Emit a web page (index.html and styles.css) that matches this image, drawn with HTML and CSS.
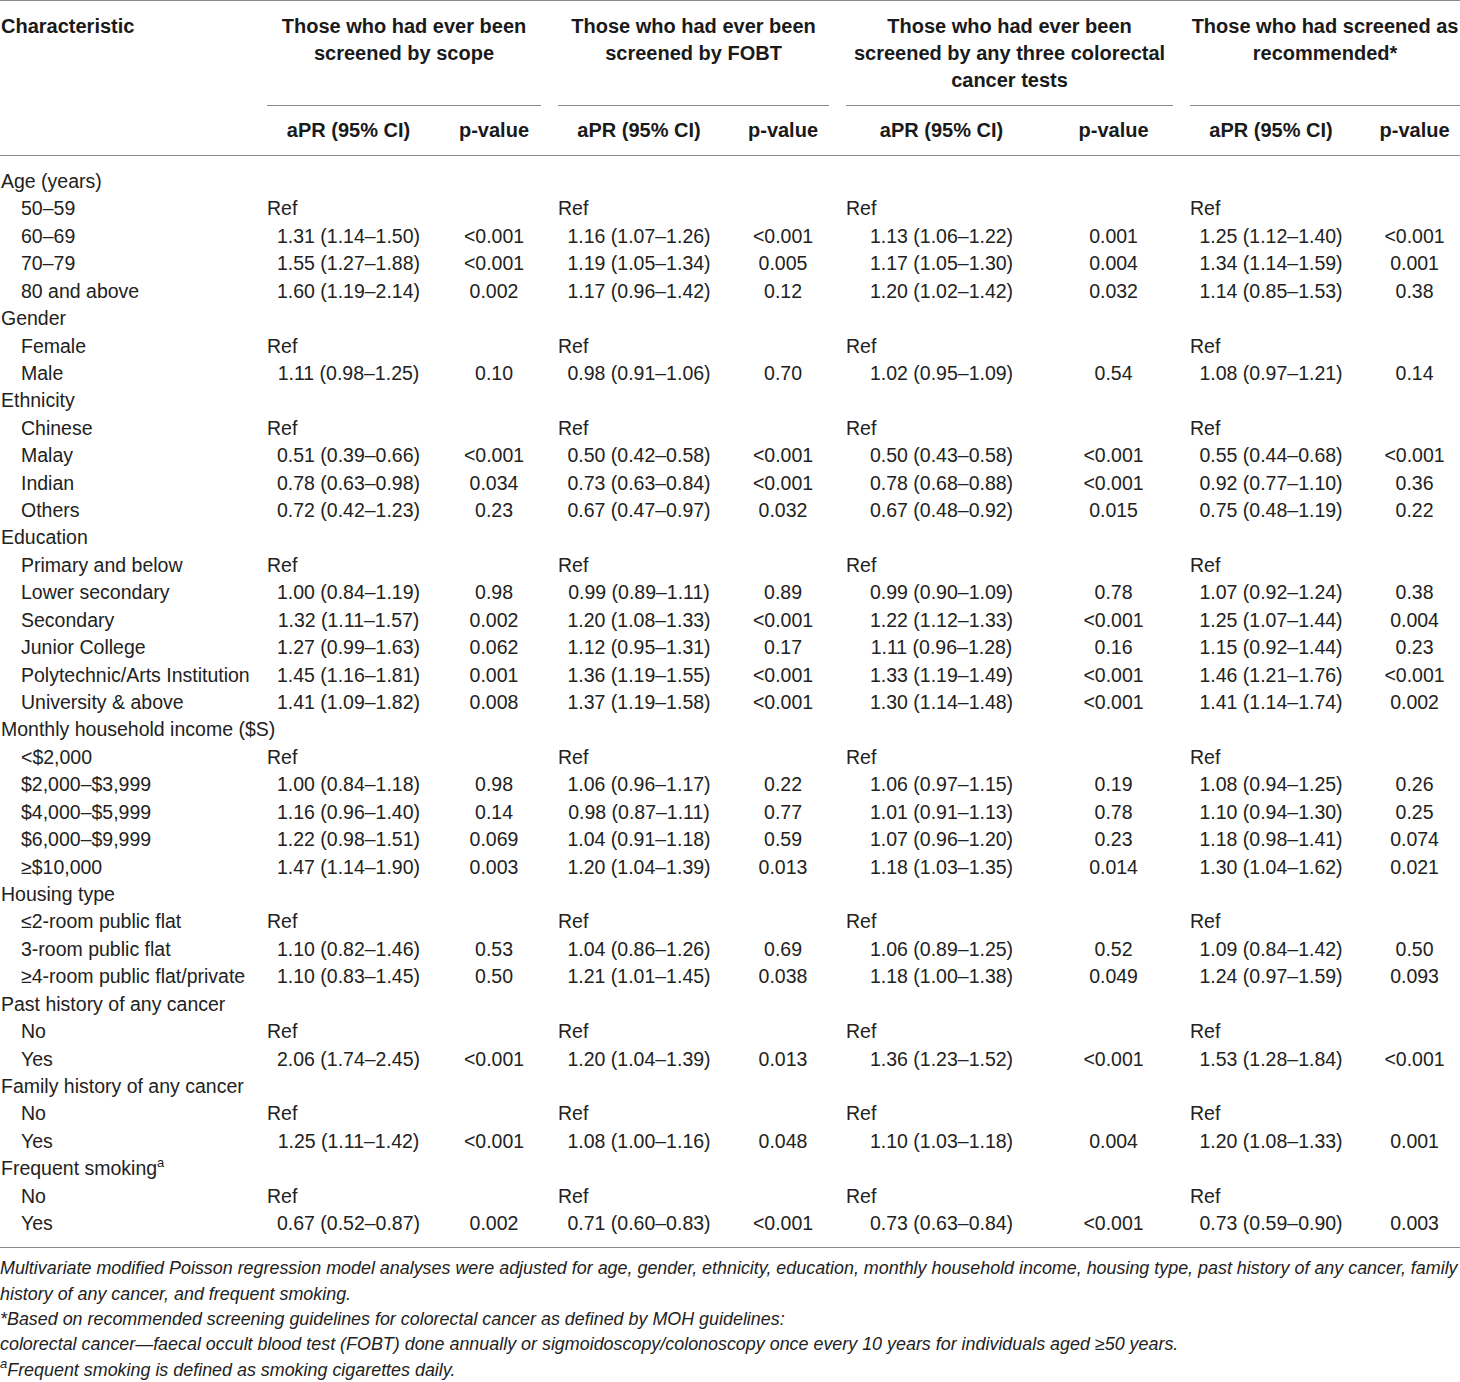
FILE: index.html
```html
<!DOCTYPE html>
<html lang="en">
<head>
<meta charset="utf-8">
<title>Table</title>
<link rel="stylesheet" href="styles.css">
</head>
<body>
<div class="page">
<table class="tbl">
  <colgroup>
    <col class="w-char">
    <col class="w-apr1"><col class="w-p1">
    <col class="w-apr2"><col class="w-p2">
    <col class="w-apr3"><col class="w-p3">
    <col class="w-apr4"><col class="w-p4">
  </colgroup>
  <thead>
    <tr>
      <th class="h-char" rowspan="2">Characteristic</th>
      <th class="h-grp" colspan="2"><div class="grp-rule">Those who had ever been<br>screened by scope</div></th>
      <th class="h-grp" colspan="2"><div class="grp-rule">Those who had ever been<br>screened by FOBT</div></th>
      <th class="h-grp" colspan="2"><div class="grp-rule">Those who had ever been<br>screened by any three colorectal<br>cancer tests</div></th>
      <th class="h-grp last" colspan="2"><div class="grp-rule">Those who had screened as<br>recommended*</div></th>
    </tr>
    <tr>
      <th class="h-sub">aPR (95% CI)</th><th class="h-sub">p-value</th>
      <th class="h-sub">aPR (95% CI)</th><th class="h-sub">p-value</th>
      <th class="h-sub">aPR (95% CI)</th><th class="h-sub">p-value</th>
      <th class="h-sub">aPR (95% CI)</th><th class="h-sub last">p-value</th>
    </tr>
  </thead>
  <tbody>
    <tr class="first"><td class="cat">Age (years)</td><td></td><td></td><td></td><td></td><td></td><td></td><td></td><td></td></tr>
    <tr><td class="item">50–59</td><td class="ref">Ref</td><td></td><td class="ref">Ref</td><td></td><td class="ref">Ref</td><td></td><td class="ref">Ref</td><td></td></tr>
    <tr><td class="item">60–69</td><td class="val">1.31 (1.14–1.50)</td><td class="pv">&lt;0.001</td><td class="val">1.16 (1.07–1.26)</td><td class="pv">&lt;0.001</td><td class="val">1.13 (1.06–1.22)</td><td class="pv">0.001</td><td class="val">1.25 (1.12–1.40)</td><td class="pv">&lt;0.001</td></tr>
    <tr><td class="item">70–79</td><td class="val">1.55 (1.27–1.88)</td><td class="pv">&lt;0.001</td><td class="val">1.19 (1.05–1.34)</td><td class="pv">0.005</td><td class="val">1.17 (1.05–1.30)</td><td class="pv">0.004</td><td class="val">1.34 (1.14–1.59)</td><td class="pv">0.001</td></tr>
    <tr><td class="item">80 and above</td><td class="val">1.60 (1.19–2.14)</td><td class="pv">0.002</td><td class="val">1.17 (0.96–1.42)</td><td class="pv">0.12</td><td class="val">1.20 (1.02–1.42)</td><td class="pv">0.032</td><td class="val">1.14 (0.85–1.53)</td><td class="pv">0.38</td></tr>

    <tr><td class="cat">Gender</td><td></td><td></td><td></td><td></td><td></td><td></td><td></td><td></td></tr>
    <tr><td class="item">Female</td><td class="ref">Ref</td><td></td><td class="ref">Ref</td><td></td><td class="ref">Ref</td><td></td><td class="ref">Ref</td><td></td></tr>
    <tr><td class="item">Male</td><td class="val">1.11 (0.98–1.25)</td><td class="pv">0.10</td><td class="val">0.98 (0.91–1.06)</td><td class="pv">0.70</td><td class="val">1.02 (0.95–1.09)</td><td class="pv">0.54</td><td class="val">1.08 (0.97–1.21)</td><td class="pv">0.14</td></tr>

    <tr><td class="cat">Ethnicity</td><td></td><td></td><td></td><td></td><td></td><td></td><td></td><td></td></tr>
    <tr><td class="item">Chinese</td><td class="ref">Ref</td><td></td><td class="ref">Ref</td><td></td><td class="ref">Ref</td><td></td><td class="ref">Ref</td><td></td></tr>
    <tr><td class="item">Malay</td><td class="val">0.51 (0.39–0.66)</td><td class="pv">&lt;0.001</td><td class="val">0.50 (0.42–0.58)</td><td class="pv">&lt;0.001</td><td class="val">0.50 (0.43–0.58)</td><td class="pv">&lt;0.001</td><td class="val">0.55 (0.44–0.68)</td><td class="pv">&lt;0.001</td></tr>
    <tr><td class="item">Indian</td><td class="val">0.78 (0.63–0.98)</td><td class="pv">0.034</td><td class="val">0.73 (0.63–0.84)</td><td class="pv">&lt;0.001</td><td class="val">0.78 (0.68–0.88)</td><td class="pv">&lt;0.001</td><td class="val">0.92 (0.77–1.10)</td><td class="pv">0.36</td></tr>
    <tr><td class="item">Others</td><td class="val">0.72 (0.42–1.23)</td><td class="pv">0.23</td><td class="val">0.67 (0.47–0.97)</td><td class="pv">0.032</td><td class="val">0.67 (0.48–0.92)</td><td class="pv">0.015</td><td class="val">0.75 (0.48–1.19)</td><td class="pv">0.22</td></tr>

    <tr><td class="cat">Education</td><td></td><td></td><td></td><td></td><td></td><td></td><td></td><td></td></tr>
    <tr><td class="item">Primary and below</td><td class="ref">Ref</td><td></td><td class="ref">Ref</td><td></td><td class="ref">Ref</td><td></td><td class="ref">Ref</td><td></td></tr>
    <tr><td class="item">Lower secondary</td><td class="val">1.00 (0.84–1.19)</td><td class="pv">0.98</td><td class="val">0.99 (0.89–1.11)</td><td class="pv">0.89</td><td class="val">0.99 (0.90–1.09)</td><td class="pv">0.78</td><td class="val">1.07 (0.92–1.24)</td><td class="pv">0.38</td></tr>
    <tr><td class="item">Secondary</td><td class="val">1.32 (1.11–1.57)</td><td class="pv">0.002</td><td class="val">1.20 (1.08–1.33)</td><td class="pv">&lt;0.001</td><td class="val">1.22 (1.12–1.33)</td><td class="pv">&lt;0.001</td><td class="val">1.25 (1.07–1.44)</td><td class="pv">0.004</td></tr>
    <tr><td class="item">Junior College</td><td class="val">1.27 (0.99–1.63)</td><td class="pv">0.062</td><td class="val">1.12 (0.95–1.31)</td><td class="pv">0.17</td><td class="val">1.11 (0.96–1.28)</td><td class="pv">0.16</td><td class="val">1.15 (0.92–1.44)</td><td class="pv">0.23</td></tr>
    <tr><td class="item">Polytechnic/Arts Institution</td><td class="val">1.45 (1.16–1.81)</td><td class="pv">0.001</td><td class="val">1.36 (1.19–1.55)</td><td class="pv">&lt;0.001</td><td class="val">1.33 (1.19–1.49)</td><td class="pv">&lt;0.001</td><td class="val">1.46 (1.21–1.76)</td><td class="pv">&lt;0.001</td></tr>
    <tr><td class="item">University &amp; above</td><td class="val">1.41 (1.09–1.82)</td><td class="pv">0.008</td><td class="val">1.37 (1.19–1.58)</td><td class="pv">&lt;0.001</td><td class="val">1.30 (1.14–1.48)</td><td class="pv">&lt;0.001</td><td class="val">1.41 (1.14–1.74)</td><td class="pv">0.002</td></tr>

    <tr><td class="cat">Monthly household income ($S)</td><td></td><td></td><td></td><td></td><td></td><td></td><td></td><td></td></tr>
    <tr><td class="item">&lt;$2,000</td><td class="ref">Ref</td><td></td><td class="ref">Ref</td><td></td><td class="ref">Ref</td><td></td><td class="ref">Ref</td><td></td></tr>
    <tr><td class="item">$2,000–$3,999</td><td class="val">1.00 (0.84–1.18)</td><td class="pv">0.98</td><td class="val">1.06 (0.96–1.17)</td><td class="pv">0.22</td><td class="val">1.06 (0.97–1.15)</td><td class="pv">0.19</td><td class="val">1.08 (0.94–1.25)</td><td class="pv">0.26</td></tr>
    <tr><td class="item">$4,000–$5,999</td><td class="val">1.16 (0.96–1.40)</td><td class="pv">0.14</td><td class="val">0.98 (0.87–1.11)</td><td class="pv">0.77</td><td class="val">1.01 (0.91–1.13)</td><td class="pv">0.78</td><td class="val">1.10 (0.94–1.30)</td><td class="pv">0.25</td></tr>
    <tr><td class="item">$6,000–$9,999</td><td class="val">1.22 (0.98–1.51)</td><td class="pv">0.069</td><td class="val">1.04 (0.91–1.18)</td><td class="pv">0.59</td><td class="val">1.07 (0.96–1.20)</td><td class="pv">0.23</td><td class="val">1.18 (0.98–1.41)</td><td class="pv">0.074</td></tr>
    <tr><td class="item">≥$10,000</td><td class="val">1.47 (1.14–1.90)</td><td class="pv">0.003</td><td class="val">1.20 (1.04–1.39)</td><td class="pv">0.013</td><td class="val">1.18 (1.03–1.35)</td><td class="pv">0.014</td><td class="val">1.30 (1.04–1.62)</td><td class="pv">0.021</td></tr>

    <tr><td class="cat">Housing type</td><td></td><td></td><td></td><td></td><td></td><td></td><td></td><td></td></tr>
    <tr><td class="item">≤2-room public flat</td><td class="ref">Ref</td><td></td><td class="ref">Ref</td><td></td><td class="ref">Ref</td><td></td><td class="ref">Ref</td><td></td></tr>
    <tr><td class="item">3-room public flat</td><td class="val">1.10 (0.82–1.46)</td><td class="pv">0.53</td><td class="val">1.04 (0.86–1.26)</td><td class="pv">0.69</td><td class="val">1.06 (0.89–1.25)</td><td class="pv">0.52</td><td class="val">1.09 (0.84–1.42)</td><td class="pv">0.50</td></tr>
    <tr><td class="item">≥4-room public flat/private</td><td class="val">1.10 (0.83–1.45)</td><td class="pv">0.50</td><td class="val">1.21 (1.01–1.45)</td><td class="pv">0.038</td><td class="val">1.18 (1.00–1.38)</td><td class="pv">0.049</td><td class="val">1.24 (0.97–1.59)</td><td class="pv">0.093</td></tr>

    <tr><td class="cat">Past history of any cancer</td><td></td><td></td><td></td><td></td><td></td><td></td><td></td><td></td></tr>
    <tr><td class="item">No</td><td class="ref">Ref</td><td></td><td class="ref">Ref</td><td></td><td class="ref">Ref</td><td></td><td class="ref">Ref</td><td></td></tr>
    <tr><td class="item">Yes</td><td class="val">2.06 (1.74–2.45)</td><td class="pv">&lt;0.001</td><td class="val">1.20 (1.04–1.39)</td><td class="pv">0.013</td><td class="val">1.36 (1.23–1.52)</td><td class="pv">&lt;0.001</td><td class="val">1.53 (1.28–1.84)</td><td class="pv">&lt;0.001</td></tr>

    <tr><td class="cat">Family history of any cancer</td><td></td><td></td><td></td><td></td><td></td><td></td><td></td><td></td></tr>
    <tr><td class="item">No</td><td class="ref">Ref</td><td></td><td class="ref">Ref</td><td></td><td class="ref">Ref</td><td></td><td class="ref">Ref</td><td></td></tr>
    <tr><td class="item">Yes</td><td class="val">1.25 (1.11–1.42)</td><td class="pv">&lt;0.001</td><td class="val">1.08 (1.00–1.16)</td><td class="pv">0.048</td><td class="val">1.10 (1.03–1.18)</td><td class="pv">0.004</td><td class="val">1.20 (1.08–1.33)</td><td class="pv">0.001</td></tr>

    <tr><td class="cat">Frequent smoking<sup class="sup">a</sup></td><td></td><td></td><td></td><td></td><td></td><td></td><td></td><td></td></tr>
    <tr><td class="item">No</td><td class="ref">Ref</td><td></td><td class="ref">Ref</td><td></td><td class="ref">Ref</td><td></td><td class="ref">Ref</td><td></td></tr>
    <tr class="last-row"><td class="item">Yes</td><td class="val">0.67 (0.52–0.87)</td><td class="pv">0.002</td><td class="val">0.71 (0.60–0.83)</td><td class="pv">&lt;0.001</td><td class="val">0.73 (0.63–0.84)</td><td class="pv">&lt;0.001</td><td class="val">0.73 (0.59–0.90)</td><td class="pv">0.003</td></tr>
  </tbody>
</table>
<div class="notes">
  <p class="note">Multivariate modified Poisson regression model analyses were adjusted for age, gender, ethnicity, education, monthly household income, housing type, past history of any cancer, family history of any cancer, and frequent smoking.</p>
  <p class="note">*Based on recommended screening guidelines for colorectal cancer as defined by MOH guidelines:</p>
  <p class="note">colorectal cancer—faecal occult blood test (FOBT) done annually or sigmoidoscopy/colonoscopy once every 10 years for individuals aged ≥50 years.</p>
  <p class="note"><sup class="sup">a</sup>Frequent smoking is defined as smoking cigarettes daily.</p>
</div>
</div>
</body>
</html>
```

FILE: styles.css
```css
html, body {
  margin: 0;
  padding: 0;
  background: #ffffff;
}

.page {
  width: 1460px;
  font-family: "Liberation Sans", Arial, sans-serif;
  color: #222222;
}

.tbl {
  width: 1460px;
  table-layout: fixed;
  border-collapse: separate;
  border-spacing: 0;
  border-top: 1px solid #8a8a8a;
}

.w-char { width: 258px; }
.w-apr1 { width: 180px; }
.w-p1 { width: 111px; }
.w-apr2 { width: 179px; }
.w-p2 { width: 109px; }
.w-apr3 { width: 208px; }
.w-p3 { width: 136px; }
.w-apr4 { width: 179px; }
.w-p4 { width: 100px; }

.tbl th,
.tbl td {
  padding: 0 8px 0 9px;
  white-space: nowrap;
}

.tbl th {
  font-weight: bold;
  font-size: 20px;
  line-height: 27px;
  color: #1a1a1a;
}

.tbl th.last,
.tbl td:last-child {
  padding-right: 0;
}

.h-char {
  text-align: left;
  vertical-align: top;
  padding: 12px 0 0 1px !important;
  border-bottom: 1px solid #8a8a8a;
}

.h-grp {
  text-align: center;
  vertical-align: top;
  padding-top: 12px !important;
}

.grp-rule {
  height: 81px;
  padding-bottom: 11px;
  border-bottom: 1px solid #8a8a8a;
}

.h-sub {
  text-align: center;
  padding-top: 11px !important;
  padding-bottom: 11px !important;
  border-bottom: 1px solid #8a8a8a;
}

.tbl td {
  font-size: 19.5px;
  line-height: 27.42px;
  height: 27.42px;
}

.tbl tr.first td {
  padding-top: 12px;
}

.tbl tr.last-row td {
  padding-bottom: 10px;
  border-bottom: 1px solid #8a8a8a;
}

.cat {
  padding-left: 1px !important;
}

.item {
  padding-left: 21px !important;
}

.ref {
  text-align: left;
}

.val,
.pv {
  text-align: center;
}

.sup {
  font-size: 13px;
  line-height: 0;
  vertical-align: 8px;
}

.notes {
  padding-top: 8px;
}

.note {
  margin: 0;
  font-style: italic;
  font-size: 17.9px;
  line-height: 25.3px;
  color: #222222;
}
```
